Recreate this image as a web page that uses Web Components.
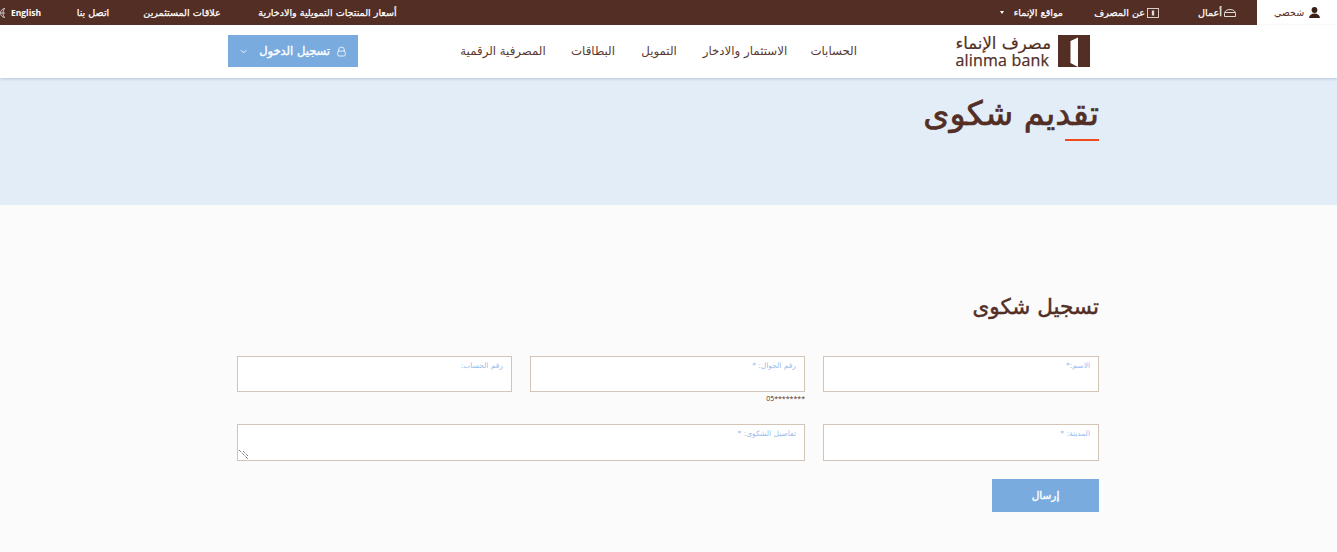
<!DOCTYPE html>
<html lang="ar" dir="rtl"><head><meta charset="utf-8">
<style>
html,body{margin:0;padding:0;background:#fbfbfb;height:552px;overflow:hidden}
body{font-family:"DejaVu Sans","Noto Sans",sans-serif;color:#522e25}
</style></head><body>
<top-bar></top-bar>
<main-header></main-header>
<page-hero>تقديم شكوى</page-hero>
<complaint-form></complaint-form>
<script>
function def(name,html){customElements.define(name,class extends HTMLElement{constructor(){super();this.attachShadow({mode:'open'}).innerHTML=html;}});}
def('top-bar',`<style>
:host{display:flex;height:25px;background:#522e25;color:#fff;font-size:9.600px;-webkit-text-stroke:.25px #fff;align-items:stretch;direction:rtl}
.i{display:flex;align-items:center;justify-content:center;gap:2px;white-space:nowrap;flex:none}
.i svg{flex:none}
.t{width:80px;background:#fff;color:#522e25;font-size:9.500px;-webkit-text-stroke:0;gap:5px}
.between{justify-content:space-between}
</style>
<div class="i t"><svg width="11" height="11" viewBox="0 0 11 11"><circle cx="5.500" cy="3" r="2.900" fill="#3a2018"/><path d="M0 11c.3-3 2.500-4.500 5.500-4.500S10.700 8 11 11z" fill="#3a2018"/></svg><span>شخصي</span></div>
<div class="i between" style="width:38px;margin-right:21px"><svg width="12" height="8" viewBox="0 0 12 8" fill="none" stroke="#f3ece8" stroke-width=".9"><path d="M.5 7.500V4.500C.5 2 3 .5 6 .5s5.500 1.500 5.500 4v3zM.8 3.500h10.400"/></svg><span>أعمال</span></div>
<div class="i between" style="width:59px;margin-right:39px"><svg width="12" height="10" viewBox="0 0 12 10" fill="none" stroke="#e6dcd7" stroke-width=".9"><rect x=".5" y=".5" width="11" height="9"/><rect x="4.800" y="2.500" width="2.400" height="5" fill="#e6dcd7" stroke="none"/></svg><span>عن المصرف</span></div>
<div class="i between" style="width:63px;margin-right:37px"><span>مواقع الإنماء</span><svg width="4" height="3" viewBox="0 0 4 3"><path d="M0 0h4L2 3z" fill="#fff"/></svg></div>
<div class="i" style="width:143px;margin-right:601px">أسعار المنتجات التمويلية والادخارية</div>
<div class="i" style="width:76px;margin-right:36px">علاقات المستثمرين</div>
<div class="i" style="width:30px;margin-right:36px">اتصل بنا</div>
<div class="i" style="width:30px;margin-right:37px"><span style="font-family:'Open Sans',sans-serif;font-size:8.500px;font-weight:700;-webkit-text-stroke:0;direction:ltr">English</span></div>
<div class="i" style="width:5px;margin-right:6px;overflow:hidden;justify-content:flex-end"><svg width="10" height="10" viewBox="0 0 10 10" fill="none" stroke="#ddd" stroke-width=".8"><circle cx="5" cy="5" r="4.500"/><ellipse cx="5" cy="5" rx="2" ry="4.500"/><path d="M.5 5h9"/></svg></div>`);
def('main-header',`<style>
:host{display:flex;height:53px;background:#fff;box-sizing:border-box;align-items:flex-start;direction:rtl;position:relative;box-shadow:0 1px 3px rgba(80,110,140,.28);padding:10px 247px 0 0}
.logo{display:flex;gap:7px;width:134px;flex:none}
.mark{width:32px;height:32px;flex:none;display:block}
.w{display:flex;flex-direction:column;align-items:flex-end}
.ar{font-size:16.500px;line-height:18px;white-space:nowrap;-webkit-text-stroke:.2px #522e25}
.en{font-family:"Open Sans",sans-serif;font-weight:400;-webkit-text-stroke:.25px #522e25;font-size:16px;line-height:14px;direction:ltr;white-space:nowrap;letter-spacing:.2px}
nav{display:flex;margin-right:99px;font-size:11.800px;line-height:32px;white-space:nowrap;color:#5a3a32}
nav span{display:block;text-align:center;flex:none}
.btn{margin-right:auto;margin-left:228px;width:130px;height:32px;background:#7aabdf;color:#fff;display:flex;align-items:center;box-sizing:border-box;padding:0 12px;gap:7px;font-size:11.500px;-webkit-text-stroke:.35px #fff;white-space:nowrap}
</style>
<div class="logo"><svg class="mark" viewBox="0 0 32 32"><path d="M0 0H32V32H0z" fill="#522e25"/><path d="M12.500 6 20 2.500V32L12.500 28z" fill="#fff"/></svg><div class="w"><span class="ar">مصرف الإنماء</span><span class="en">alinma bank</span></div></div>
<nav><span style="width:45px">الحسابات</span><span style="width:86px;margin-right:24px">الاستثمار والادخار</span><span style="width:38px;margin-right:24px">التمويل</span><span style="width:43px;margin-right:25px">البطاقات</span><span style="width:88px;margin-right:25px">المصرفية الرقمية</span></nav>
<div class="btn"><svg width="10" height="11" viewBox="0 0 10 11" fill="none" stroke="#fff" stroke-width=".9"><rect x=".8" y="5" width="8.400" height="5.500" rx="1.500"/><path d="M1.800 5.500V3.800a3.200 3.200 0 0 1 6.400 0V5.500"/></svg><span style="width:72px;text-align:center">تسجيل الدخول</span><svg width="8" height="5" viewBox="0 0 8 5" fill="none" stroke="#fff" stroke-width="1" style="margin-right:5px"><path d="M1 1l3 3 3-3"/></svg></div>`);
def('page-hero',`<style>
:host{display:block;height:127px;background:#e2edf8;box-sizing:border-box;padding:16px 238px 0 0;direction:rtl}
h1{margin:0;font-size:33.400px;font-weight:400;-webkit-text-stroke:.7px #522e25;line-height:40px;color:#522e25;white-space:nowrap}
i{display:block;width:34px;height:2px;background:#f04a1d;margin-top:5px}
</style><h1><slot></slot></h1><i></i>`);
def('form-field',`<style>
:host{display:block;position:relative;box-sizing:border-box;background:#fff;border:1px solid #d2c4b6;height:36px;padding:4px 8px 0;font-size:7.500px;color:#9dbdec;white-space:nowrap;line-height:10px}
:host([rows]){height:37px}
::slotted(svg){position:absolute;left:1px;bottom:1px}
</style><slot></slot><slot name="x"></slot>`);
def('complaint-form',`<style>
:host{display:block;box-sizing:border-box;padding:88px 238px 0 238px;direction:rtl}
h2{margin:0 0 35px;font-size:21.500px;font-weight:400;-webkit-text-stroke:.45px #522e25;line-height:28px;color:#522e25;white-space:nowrap}
.g{display:grid;grid-template-columns:276px 275px 275px;column-gap:18px;grid-template-rows:36px 37px;row-gap:32px}
.f{position:relative}
small{position:absolute;right:0;top:100%;font-family:"Open Sans",sans-serif;font-size:7px;line-height:14px;direction:ltr;color:#522e25}
.s{grid-column:span 2}
.b{display:block;margin:18px 0 0 auto;width:107px;height:33px;background:#7aabdf;color:#fff;font-size:10.500px;-webkit-text-stroke:.35px #fff;line-height:33px;text-align:center}
</style>
<h2>تسجيل شكوى</h2>
<div class="g">
<form-field>الاسم:*</form-field>
<div class="f"><form-field>رقم الجوال: *</form-field><small>05********</small></div>
<form-field>رقم الحساب:</form-field>
<form-field rows>المدينة: *</form-field>
<form-field rows class="s">تفاصيل الشكوى: *<svg slot="x" width="9" height="9" viewBox="0 0 9 9" fill="none" stroke="#444" stroke-width="1" stroke-dasharray="1 1"><path d="M0 0l9 9M4 1l5 5"/></svg></form-field>
</div>
<div class="b">إرسال</div>`);
</script>
</body></html>
